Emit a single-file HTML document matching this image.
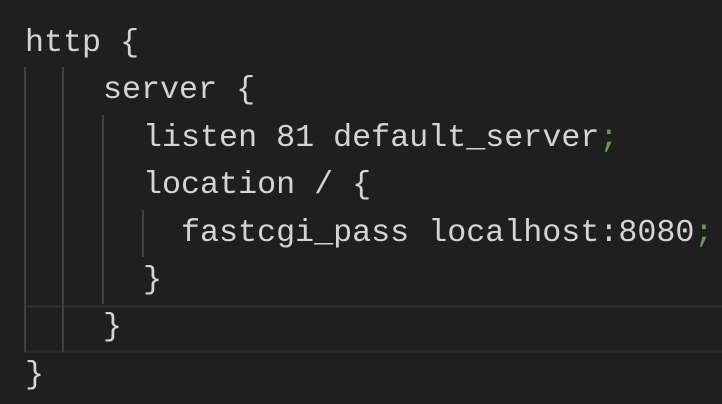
<!DOCTYPE html>
<html><head><style>
html,body{margin:0;padding:0;background:#1f1f1f;width:722px;height:404px;overflow:hidden}
.ed{position:absolute;left:0;top:20px;width:722px}
.l{position:relative;height:47.4px;line-height:47.4px;font-family:"Liberation Mono",monospace;font-size:31.7px;color:#d4d4d4;white-space:pre}
.g{position:absolute;top:0;bottom:0;width:2px;background:#404040}
.cur{position:absolute;left:25px;right:0;top:305px;height:48px;border-top:3px solid #2a2a2a;border-bottom:3px solid #2a2a2a;box-sizing:border-box}
.s{color:#6a9a4a}
</style></head><body>
<div class="cur"></div>
<div class="ed">
<div class="l" style="padding-left:25px">http {</div>
<div class="l" style="padding-left:103px"><span class="g" style="left:24px"></span><span class="g" style="left:62px"></span>server {</div>
<div class="l" style="padding-left:143px"><span class="g" style="left:24px"></span><span class="g" style="left:62px"></span><span class="g" style="left:102px"></span>listen 81 default_server<span class="s">;</span></div>
<div class="l" style="padding-left:143px"><span class="g" style="left:24px"></span><span class="g" style="left:62px"></span><span class="g" style="left:102px"></span>location / {</div>
<div class="l" style="padding-left:181px"><span class="g" style="left:24px"></span><span class="g" style="left:62px"></span><span class="g" style="left:102px"></span><span class="g" style="left:142px"></span>fastcgi_pass localhost:8080<span class="s">;</span></div>
<div class="l" style="padding-left:143px"><span class="g" style="left:24px"></span><span class="g" style="left:62px"></span><span class="g" style="left:102px"></span>}</div>
<div class="l" style="padding-left:103px"><span class="g" style="left:24px"></span><span class="g" style="left:62px"></span>}</div>
<div class="l" style="padding-left:25px">}</div>
</div>
</body></html>
